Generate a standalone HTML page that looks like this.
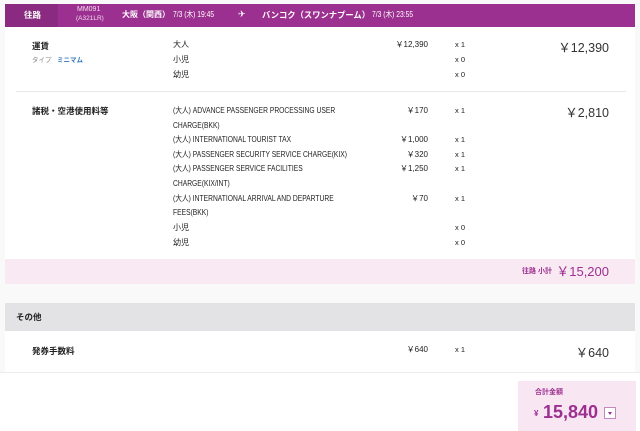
<!DOCTYPE html>
<html><head><meta charset="utf-8"><style>
*{margin:0;padding:0;box-sizing:border-box}
body{width:640px;height:431px;background:#fff;position:relative;overflow:hidden;font-family:"Liberation Sans","Noto Sans CJK JP",sans-serif;color:#222}
.a{position:absolute}
.t{position:absolute;white-space:nowrap;line-height:1;font-size:8px}
.n{transform:scaleX(.84);transform-origin:left center}
.r{text-align:right}
.b{font-weight:bold}
.big{font-size:12.5px;color:#333}
</style></head><body>
<div class="a" style="left:0;top:0;width:5px;height:372px;background:#f9f9f9"></div>
<div class="a" style="left:635px;top:0;width:5px;height:372px;background:#f9f9f9"></div>
<div class="a" style="left:0;top:0;width:640px;height:4px;background:#f9f9f9"></div>
<!-- header -->
<div class="a" style="left:5px;top:4px;width:630px;height:23px;background:#9c3090"></div>
<div class="a" style="left:5px;top:4px;width:53px;height:23px;background:#8a2a80"></div>
<div class="t b" style="left:24px;top:11px;color:#fff;font-size:8.5px">往路</div>
<div class="t" style="left:77px;top:6px;color:#f3dcef;font-size:7px">MM091</div>
<div class="t" style="left:76px;top:16px;color:#f3dcef;font-size:6.5px">(A321LR)</div>
<div class="t b" style="left:122px;top:11px;color:#fff;font-size:8px">大阪（関西）</div>
<div class="t n" style="left:173px;top:11px;color:#fff;font-size:8px">7/3 (木) 19:45</div>
<div class="t" style="left:238px;top:10px;color:#fff;font-size:9px">✈</div>
<div class="t b" style="left:262px;top:11px;color:#fff;font-size:8.3px">バンコク（スワンナプーム）</div>
<div class="t n" style="left:372px;top:11px;color:#fff;font-size:8px">7/3 (木) 23:55</div>
<!-- fare -->
<div class="t b" style="left:32px;top:42px;font-size:8.5px">運賃</div>
<div class="t" style="left:32px;top:58px;font-size:6.5px;color:#888">タイプ</div>
<div class="t b" style="left:57px;top:58px;font-size:6.5px;color:#3a78c0">ミニマム</div>
<div class="t" style="left:173px;top:41px">大人</div>
<div class="t" style="left:173px;top:56px">小児</div>
<div class="t" style="left:173px;top:71px">幼児</div>
<div class="t r" style="left:380px;top:41px;width:48px">￥12,390</div>
<div class="t" style="left:455px;top:41px;font-size:7.5px">x 1</div>
<div class="t" style="left:455px;top:56px;font-size:7.5px">x 0</div>
<div class="t" style="left:455px;top:71px;font-size:7.5px">x 0</div>
<div class="t big r" style="left:540px;top:42px;width:69px">￥12,390</div>
<div class="a" style="left:16px;top:91px;width:610px;height:1px;background:#e8e8e8"></div>
<!-- tax -->
<div class="t b" style="left:32px;top:107px;font-size:8.5px">諸税・空港使用料等</div>
<div class="t big r" style="left:540px;top:107px;width:69px">￥2,810</div>
<div class="t n" style="left:173px;top:107px">(大人) ADVANCE PASSENGER PROCESSING USER</div>
<div class="t n" style="left:173px;top:122px">CHARGE(BKK)</div>
<div class="t n" style="left:173px;top:136px">(大人) INTERNATIONAL TOURIST TAX</div>
<div class="t n" style="left:173px;top:151px">(大人) PASSENGER SECURITY SERVICE CHARGE(KIX)</div>
<div class="t n" style="left:173px;top:165px">(大人) PASSENGER SERVICE FACILITIES</div>
<div class="t n" style="left:173px;top:180px">CHARGE(KIX/INT)</div>
<div class="t n" style="left:173px;top:195px">(大人) INTERNATIONAL ARRIVAL AND DEPARTURE</div>
<div class="t n" style="left:173px;top:209px">FEES(BKK)</div>
<div class="t" style="left:173px;top:224px">小児</div>
<div class="t" style="left:173px;top:239px">幼児</div>
<div class="t r" style="left:380px;top:107px;width:48px">￥170</div>
<div class="t r" style="left:380px;top:136px;width:48px">￥1,000</div>
<div class="t r" style="left:380px;top:151px;width:48px">￥320</div>
<div class="t r" style="left:380px;top:165px;width:48px">￥1,250</div>
<div class="t r" style="left:380px;top:195px;width:48px">￥70</div>
<div class="t" style="left:455px;top:107px;font-size:7.5px">x 1</div>
<div class="t" style="left:455px;top:136px;font-size:7.5px">x 1</div>
<div class="t" style="left:455px;top:151px;font-size:7.5px">x 1</div>
<div class="t" style="left:455px;top:165px;font-size:7.5px">x 1</div>
<div class="t" style="left:455px;top:195px;font-size:7.5px">x 1</div>
<div class="t" style="left:455px;top:224px;font-size:7.5px">x 0</div>
<div class="t" style="left:455px;top:239px;font-size:7.5px">x 0</div>
<!-- subtotal -->
<div class="a" style="left:5px;top:259px;width:630px;height:25px;background:#f9e9f3"></div>
<div class="t b" style="left:522px;top:268px;font-size:7px;color:#9c3090">往路 小計</div>
<div class="t r" style="left:540px;top:265px;width:69px;font-size:13px;color:#9c3090">￥15,200</div>
<div class="a" style="left:5px;top:284px;width:630px;height:19px;background:#f9f9f9"></div>
<!-- other -->
<div class="a" style="left:5px;top:303px;width:630px;height:28px;background:#e3e3e5"></div>
<div class="t b" style="left:16px;top:313px;font-size:8.5px">その他</div>
<div class="t b" style="left:32px;top:347px;font-size:8.5px">発券手数料</div>
<div class="t r" style="left:380px;top:346px;width:48px">￥640</div>
<div class="t" style="left:455px;top:346px;font-size:7.5px">x 1</div>
<div class="t big r" style="left:540px;top:347px;width:69px">￥640</div>
<div class="a" style="left:0;top:372px;width:640px;height:1px;background:#ececec"></div>
<!-- total -->
<div class="a" style="left:518px;top:381px;width:118px;height:50px;background:#f9e6f3"></div>
<div class="t b" style="left:535px;top:389px;font-size:7px;color:#9c3090">合計金額</div>
<div class="t b" style="left:534px;top:410px;font-size:8px;color:#9c3090">¥</div>
<div class="t b" style="left:543px;top:403px;font-size:18px;color:#9c3090">15,840</div>
<div class="a" style="left:604px;top:407px;width:12px;height:12px;border:1px solid #c58abc;background:#fff"></div>
<div class="a" style="left:608px;top:412px;width:0;height:0;border-left:2.5px solid transparent;border-right:2.5px solid transparent;border-top:3px solid #9c3090"></div>
</body></html>
